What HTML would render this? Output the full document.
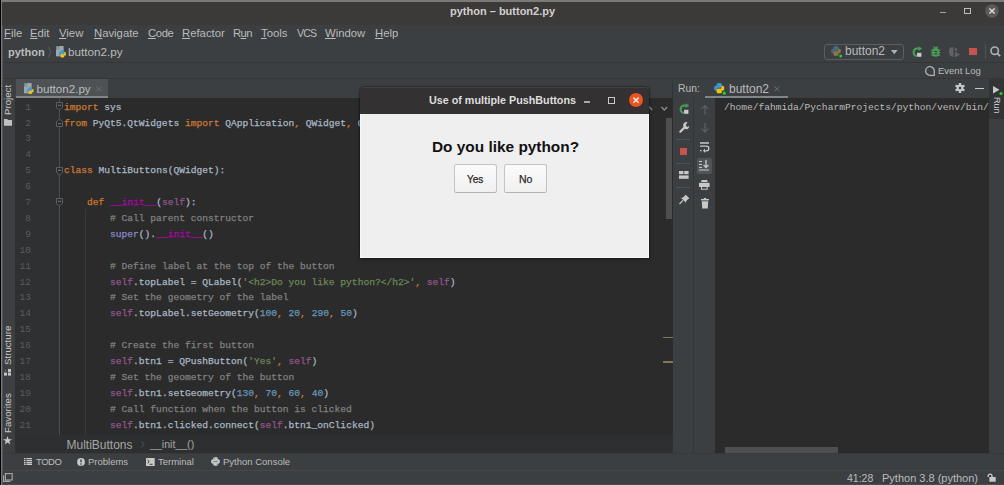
<!DOCTYPE html>
<html><head><meta charset="utf-8">
<style>
*{margin:0;padding:0;box-sizing:border-box}
html,body{width:1004px;height:485px;overflow:hidden;background:#3c3f41;font-family:"Liberation Sans",sans-serif;position:relative}
.a{position:absolute}
.t{position:absolute;white-space:pre;line-height:1}
svg{position:absolute;overflow:visible}
.mono{font-family:"Liberation Mono",monospace}
.code{position:absolute;left:64px;top:0;font-family:"Liberation Mono",monospace;font-size:9.6px;color:#a9b7c6;white-space:pre;-webkit-text-stroke:0.25px currentColor}
.ln{position:absolute;left:15px;width:16px;text-align:right;font-family:"Liberation Mono",monospace;font-size:9.6px;color:#595c5e;white-space:pre}
.k{color:#cc7832}.c{color:#808080}.s{color:#94558d}.str{color:#6a8759}.n{color:#6897bb}.d{color:#b200b2}.b{color:#8888c6}
.m u{text-decoration:underline;text-underline-offset:0.6px;text-decoration-thickness:1px}
.rot{position:absolute;white-space:pre;line-height:1;transform-origin:0 0;transform:rotate(-90deg);font-size:9.7px;color:#cacaca}
</style></head><body>
<svg width="0" height="0" style="position:absolute"><defs>
<symbol id="py" viewBox="0 0 100 100"><path d="M49 3C27 3 28 12 28 12V25H50V29H19C8 29 3 37 3 50C3 64 9 71 19 71H26V56C26 49 32 44 39 44H61C68 44 72 39 72 33V13C72 7 66 3 49 3Z" fill="var(--b)" stroke="var(--b)" stroke-width="6" stroke-linejoin="round"/><path d="M51 97C73 97 72 88 72 88V75H50V71H81C92 71 97 63 97 50C97 36 91 29 81 29H74V44C74 51 68 56 61 56H39C32 56 28 61 28 67V87C28 93 34 97 51 97Z" fill="var(--y)" stroke="var(--y)" stroke-width="6" stroke-linejoin="round"/><circle cx="38" cy="13" r="4" fill="var(--e)"/><circle cx="62" cy="87" r="4" fill="var(--e)"/></symbol>
<symbol id="rerun" viewBox="0 0 11 11"><path d="M4.8 10.1A3.8 3.8 0 0 1 4.8 2.6H7" stroke="#499c54" stroke-width="2" fill="none"/><path d="M6.6 0.2L10.2 2.6L6.6 5Z" fill="#499c54"/><rect x="5.1" y="6.8" width="4.3" height="4" fill="#cacaca"/></symbol>
</defs></svg>
<!-- outer borders -->
<div class="a" style="left:0;top:0;width:1004px;height:2px;background:#7a7a7a"></div>
<div class="a" style="left:0;top:0;width:1px;height:485px;background:#000"></div>
<div class="a" style="left:1px;top:0;width:1px;height:485px;background:#7a7a7a"></div>
<div class="a" style="left:2px;top:2px;width:1px;height:483px;background:#505254"></div>
<!-- title bar -->
<div class="a" style="left:2px;top:2px;width:1002px;height:22.5px;background:#3c3a38"></div>
<div class="t" style="left:450px;top:6px;font-size:11px;font-weight:bold;color:#d0d0d0">python – button2.py</div>
<div class="a" style="left:940px;top:11.8px;width:6px;height:1.3px;background:#a5a5a5"></div>
<div class="a" style="left:964px;top:8px;width:6.8px;height:6px;border:1.1px solid #bdbdbd"></div>
<svg style="left:985px;top:4px" width="14" height="14"><circle cx="7" cy="7" r="6.8" fill="#5c5a58"/><path d="M4.4 4.4L9.6 9.6M9.6 4.4L4.4 9.6" stroke="#dedede" stroke-width="1.4"/></svg>

<!-- menu bar -->
<div class="a" style="left:3px;top:24.5px;width:1001px;height:18px;background:#3c3f41"></div>
<div class="m" style="position:absolute;top:28px;left:0;font-size:11.3px;color:#bbbbbb">
<span class="t" style="left:4px"><u>F</u>ile</span>
<span class="t" style="left:30px"><u>E</u>dit</span>
<span class="t" style="left:59px"><u>V</u>iew</span>
<span class="t" style="left:94px"><u>N</u>avigate</span>
<span class="t" style="left:148px;letter-spacing:-0.4px"><u>C</u>ode</span>
<span class="t" style="left:182px"><u>R</u>efactor</span>
<span class="t" style="left:233px;letter-spacing:-0.6px">R<u>u</u>n</span>
<span class="t" style="left:261px"><u>T</u>ools</span>
<span class="t" style="left:297px;top:-0.2px;font-size:10.6px;letter-spacing:-0.9px">VCS</span>
<span class="t" style="left:325px"><u>W</u>indow</span>
<span class="t" style="left:375px"><u>H</u>elp</span>
</div>

<!-- nav bar -->
<div class="t" style="left:8px;top:46.7px;font-size:11px;font-weight:bold;color:#bbbbbb">python</div>
<svg style="left:47px;top:46px" width="5" height="12"><path d="M1 0.5L4 6L1 11.5" stroke="#5a5c5e" stroke-width="1" fill="none"/></svg>
<svg style="left:56px;top:46.3px" width="11" height="12"><path d="M0 0H7.6V10.3H0Z" fill="#9ea7ae"/><path d="M0 0H3.2V3.4H0Z" fill="#6f787e"/><path d="M0.8 0.8H2.6V2.8H0.8Z" fill="#9ea7ae"/><svg x="2.6" y="4.1" width="7.6" height="7.6" style="--b:#3d9bd8;--y:#f2c41a;--e:none;position:static"><circle cx="50" cy="50" r="52" fill="#4a4f52" opacity="0"/><use href="#py"/></svg></svg>
<div class="t" style="left:68px;top:46px;font-size:11.7px;color:#bbbbbb">button2.py</div>

<!-- run config combo -->
<div class="a" style="left:823.5px;top:43.5px;width:80.5px;height:16px;border:1px solid #5b5e60;border-radius:3px"></div>
<svg style="left:830.8px;top:46.2px" width="11" height="11"><svg width="10" height="10" style="--b:#4b6a82;--y:#8a7a45;--e:none;position:static"><use href="#py"/></svg><circle cx="9.7" cy="9.9" r="1.5" fill="#1ed51e"/></svg>
<div class="t" style="left:845px;top:45px;font-size:12px;color:#bbbbbb">button2</div>
<svg style="left:890.5px;top:49.5px" width="7" height="5"><path d="M0 0H6.6L3.3 4.2Z" fill="#afb1b3"/></svg>
<!-- toolbar icons -->
<svg style="left:912px;top:46px" width="11" height="11"><use href="#rerun"/></svg>
<svg style="left:931px;top:46px" width="10" height="11"><path d="M2.6 0.5L4.7 2.4L6.8 0.5" stroke="#499c54" stroke-width="1.3" fill="none"/><rect x="1.3" y="2" width="6.8" height="8.8" rx="3.2" fill="#499c54"/><path d="M0.6 4.2H8.8M0.6 6.6H8.8M0.9 9H8.5" stroke="#499c54" stroke-width="1.3" stroke-linecap="round"/><rect x="3.3" y="4.9" width="2.8" height="1" fill="#34383a"/><rect x="3.3" y="7.3" width="2.8" height="1" fill="#34383a"/></svg>
<svg style="left:949px;top:46.8px" width="11" height="11"><path d="M4.5 0.2H2.6C1 0.2 0 1.6 0 3.4V5.6C0 8 1.8 9.6 4.5 10Z" fill="#5f6163"/><path d="M5.9 0.4C7.4 0.6 8 1.6 8 3V4.6L5.9 3.4Z" fill="#5f6163"/><path d="M5.9 4.4L11 7.4L5.9 10.4Z" fill="#5f6163"/></svg>
<div class="a" style="left:969.3px;top:47.7px;width:7.7px;height:7.3px;background:#c75450"></div>
<div class="a" style="left:984.5px;top:44px;width:1px;height:15px;background:#505254"></div>
<svg style="left:989px;top:45px" width="13" height="13"><circle cx="5.7" cy="5.7" r="3.7" stroke="#afb1b3" stroke-width="1.6" fill="none"/><path d="M8.3 8.3L11.2 11.2" stroke="#afb1b3" stroke-width="1.8"/></svg>

<div class="a" style="left:3px;top:62px;width:1001px;height:1px;background:#363636"></div>
<svg style="left:925px;top:65.5px" width="11" height="11"><path d="M5 0.7A4.3 4.3 0 1 0 5 9.3H9.3V5A4.3 4.3 0 0 0 5 0.7Z" stroke="#afb1b3" stroke-width="1.3" fill="none"/></svg>
<div class="t" style="left:938px;top:65.8px;font-size:9.5px;color:#bbbbbb">Event Log</div>
<div class="a" style="left:3px;top:78px;width:1001px;height:1px;background:#363636"></div>

<!-- left strip -->
<div class="a" style="left:3px;top:79px;width:12px;height:374px;background:#3c3f41"></div>
<div class="rot" style="left:3.2px;top:115px">Project</div>
<svg style="left:3.5px;top:119px" width="8" height="7"><path d="M0 0H3.2L4 1H8V6.8H0Z" fill="#c0c0c0"/></svg>
<div class="rot" style="left:3.2px;top:364.5px">Structure</div>
<svg style="left:4px;top:368.5px" width="8" height="7"><rect x="4" y="0" width="3" height="3" fill="#c4c4c4"/><rect x="0" y="3.6" width="3" height="3" fill="#c4c4c4"/><rect x="4" y="3.6" width="3" height="3" fill="#c4c4c4"/><path d="M1.5 0.5V3.6" stroke="#8a8a8a" stroke-width="0.6"/></svg>
<div class="rot" style="left:3.2px;top:433px">Favorites</div>
<svg style="left:3px;top:436px" width="9" height="9"><path d="M4.5 0L5.6 3.2H9L6.3 5.2L7.3 8.6L4.5 6.5L1.7 8.6L2.7 5.2L0 3.2H3.4Z" fill="#c8c8c8"/></svg>

<!-- editor -->
<div class="a" style="left:15px;top:98px;width:658px;height:337px;background:#2b2b2b"></div>
<div class="a" style="left:15px;top:98px;width:44.5px;height:337px;background:#2f3032"></div>
<!-- tab -->
<div class="a" style="left:15.5px;top:79px;width:92px;height:19px;background:#4e5254"></div>
<div class="a" style="left:15.5px;top:96px;width:92px;height:2px;background:#80858a"></div>
<svg style="left:23.6px;top:83.2px" width="11" height="12"><path d="M0 0H7.6V10.3H0Z" fill="#9ea7ae"/><path d="M0 0H3.2V3.4H0Z" fill="#6f787e"/><path d="M0.8 0.8H2.6V2.8H0.8Z" fill="#9ea7ae"/><svg x="2.8" y="4.2" width="7" height="7" style="--b:#3d9bd8;--y:#f2c41a;--e:none;position:static"><use href="#py"/></svg></svg>
<div class="t" style="left:36.5px;top:82.5px;font-size:11.6px;color:#bbbbbb">button2.py</div>
<svg style="left:96px;top:85.5px" width="6" height="6"><path d="M0.3 0.3L5.4 5.4M5.4 0.3L0.3 5.4" stroke="#6a6d70" stroke-width="1"/></svg>

<!-- fold line & markers -->
<div class="a" style="left:59px;top:98px;width:1px;height:337px;background:#4a4c4e"></div>
<svg style="left:56px;top:102px" width="7" height="9"><path d="M0.5 0.5H6.5V5.5L3.5 8L0.5 5.5Z" fill="#2b2b2b" stroke="#5c5e60" stroke-width="1"/><path d="M2 3.3H5" stroke="#7a7c7e"/></svg>
<svg style="left:56px;top:117.5px" width="7" height="9"><path d="M0.5 8.5H6.5V3.5L3.5 1L0.5 3.5Z" fill="#2b2b2b" stroke="#5c5e60" stroke-width="1"/><path d="M2 5.7H5" stroke="#7a7c7e"/></svg>
<svg style="left:56px;top:166.6px" width="7" height="9"><path d="M0.5 0.5H6.5V5.5L3.5 8L0.5 5.5Z" fill="#2b2b2b" stroke="#5c5e60" stroke-width="1"/><path d="M2 3.3H5" stroke="#7a7c7e"/></svg>
<svg style="left:56px;top:198.4px" width="7" height="9"><path d="M0.5 0.5H6.5V5.5L3.5 8L0.5 5.5Z" fill="#2b2b2b" stroke="#5c5e60" stroke-width="1"/><path d="M2 3.3H5" stroke="#7a7c7e"/></svg>
<div class="a" style="left:85px;top:209px;width:1px;height:226px;background:#393939"></div>

<div id="code" class="a" style="left:0;top:99.7px;width:673px;height:335px;line-height:15.9px;overflow:hidden">
<div class="ln" style="top:0.0px">1</div><div class="code" style="top:0.0px"><span class="k">import</span> sys</div>
<div class="ln" style="top:15.9px">2</div><div class="code" style="top:15.9px"><span class="k">from</span> PyQt5.QtWidgets <span class="k">import</span> QApplication<span class="k">,</span> QWidget<span class="k">,</span> QLabel<span class="k">,</span> QPushButton</div>
<div class="ln" style="top:31.8px">3</div><div class="code" style="top:31.8px"></div>
<div class="ln" style="top:47.7px">4</div><div class="code" style="top:47.7px"></div>
<div class="ln" style="top:63.6px">5</div><div class="code" style="top:63.6px"><span class="k">class</span> MultiButtons(QWidget):</div>
<div class="ln" style="top:79.5px">6</div><div class="code" style="top:79.5px"></div>
<div class="ln" style="top:95.4px">7</div><div class="code" style="top:95.4px">    <span class="k">def</span> <span class="d">__init__</span>(<span class="s">self</span>):</div>
<div class="ln" style="top:111.3px">8</div><div class="code" style="top:111.3px">        <span class="c"># Call parent constructor</span></div>
<div class="ln" style="top:127.2px">9</div><div class="code" style="top:127.2px">        <span class="b">super</span>().<span class="d">__init__</span>()</div>
<div class="ln" style="top:143.1px">10</div><div class="code" style="top:143.1px"></div>
<div class="ln" style="top:159.0px">11</div><div class="code" style="top:159.0px">        <span class="c"># Define label at the top of the button</span></div>
<div class="ln" style="top:174.9px">12</div><div class="code" style="top:174.9px">        <span class="s">self</span>.topLabel = QLabel(<span class="str">'&lt;h2&gt;Do you like python?&lt;/h2&gt;'</span><span class="k">,</span> <span class="s">self</span>)</div>
<div class="ln" style="top:190.8px">13</div><div class="code" style="top:190.8px">        <span class="c"># Set the geometry of the label</span></div>
<div class="ln" style="top:206.7px">14</div><div class="code" style="top:206.7px">        <span class="s">self</span>.topLabel.setGeometry(<span class="n">100</span><span class="k">,</span> <span class="n">20</span><span class="k">,</span> <span class="n">290</span><span class="k">,</span> <span class="n">50</span>)</div>
<div class="ln" style="top:222.6px">15</div><div class="code" style="top:222.6px"></div>
<div class="ln" style="top:238.5px">16</div><div class="code" style="top:238.5px">        <span class="c"># Create the first button</span></div>
<div class="ln" style="top:254.4px">17</div><div class="code" style="top:254.4px">        <span class="s">self</span>.btn1 = QPushButton(<span class="str">'Yes'</span><span class="k">,</span> <span class="s">self</span>)</div>
<div class="ln" style="top:270.3px">18</div><div class="code" style="top:270.3px">        <span class="c"># Set the geometry of the button</span></div>
<div class="ln" style="top:286.2px">19</div><div class="code" style="top:286.2px">        <span class="s">self</span>.btn1.setGeometry(<span class="n">130</span><span class="k">,</span> <span class="n">70</span><span class="k">,</span> <span class="n">60</span><span class="k">,</span> <span class="n">40</span>)</div>
<div class="ln" style="top:302.1px">20</div><div class="code" style="top:302.1px">        <span class="c"># Call function when the button is clicked</span></div>
<div class="ln" style="top:318.0px">21</div><div class="code" style="top:318.0px">        <span class="s">self</span>.btn1.clicked.connect(<span class="s">self</span>.btn1_onClicked)</div>
</div><!--/code-->

<!-- editor right widgets -->
<svg style="left:646px;top:105.5px" width="7" height="5"><path d="M0.5 4L3.3 1L6.1 4" stroke="#8c8c8c" stroke-width="1.3" fill="none"/></svg>
<svg style="left:660.5px;top:105.5px" width="7" height="5"><path d="M0.5 1L3.3 4L6.1 1" stroke="#8c8c8c" stroke-width="1.3" fill="none"/></svg>
<div class="a" style="left:666px;top:118px;width:6px;height:101px;background:#4d4f51"></div>
<div class="a" style="left:662.5px;top:336.8px;width:10px;height:1.6px;background:#7f765c"></div>
<div class="a" style="left:662.5px;top:361.2px;width:10px;height:1.6px;background:#7f765c"></div>

<!-- breadcrumbs -->
<div class="a" style="left:15px;top:435px;width:974px;height:18px;background:#2e2f30"></div>
<div class="t" style="left:66.5px;top:438.5px;font-size:12px;color:#a6a6a6">MultiButtons</div>
<svg style="left:140.5px;top:441px" width="4" height="7"><path d="M0.5 0.5L3 3.5L0.5 6.5" stroke="#555759" stroke-width="0.9" fill="none"/></svg>
<div class="t" style="left:150px;top:438.5px;font-size:10.6px;color:#a6a6a6">__init__()</div>

<!-- bottom toolbar -->
<div class="a" style="left:3px;top:453px;width:1001px;height:17px;background:#3c3f41;border-top:1px solid #37393b"></div>
<svg style="left:24px;top:458px" width="8" height="7"><path d="M0 0.6H1.6M0 2.6H1.6M0 4.6H1.6M0 6.4H1.6M2.4 0.6H8M2.4 2.6H8M2.4 4.6H8M2.4 6.4H8" stroke="#c8c8c8" stroke-width="1.1"/></svg>
<div class="t" style="left:36px;top:457.3px;font-size:9.5px;letter-spacing:-0.45px;color:#bbbbbb">TODO</div>
<svg style="left:76.5px;top:458px" width="8" height="8"><circle cx="4" cy="3.9" r="3.9" fill="#c8c8c8"/><path d="M4 1.4V4.3" stroke="#3c3f41" stroke-width="1.4"/><circle cx="4" cy="6" r="0.8" fill="#3c3f41"/></svg>
<div class="t" style="left:88px;top:457.3px;font-size:9.5px;color:#bbbbbb">Problems</div>
<svg style="left:145.5px;top:457.5px" width="9" height="8"><rect width="8.7" height="8" fill="#c8c8c8"/><path d="M1.5 2L3.3 3.6L1.5 5.2M3.6 6.3H6.5" stroke="#3c3f41" stroke-width="1" fill="none"/></svg>
<div class="t" style="left:158px;top:457.3px;font-size:9.5px;color:#bbbbbb">Terminal</div>
<svg style="left:211px;top:457px;--b:#c8c8c8;--y:#c8c8c8;--e:#3c3f41" width="9" height="9"><use href="#py"/></svg>
<div class="t" style="left:223px;top:457.3px;font-size:9.5px;color:#bbbbbb">Python Console</div>
<div class="a" style="left:3px;top:470px;width:1001px;height:1px;background:#474646"></div>
<svg style="left:3px;top:473px" width="10" height="9"><rect x="2.4" y="0.6" width="6.8" height="6.4" fill="none" stroke="#a8a8a8" stroke-width="1.1"/><path d="M0.6 2.2V8.4H7.2" stroke="#a8a8a8" stroke-width="1.1" fill="none"/></svg>
<div class="t" style="left:847px;top:473px;font-size:10.5px;color:#bbbbbb">41:28</div>
<div class="t" style="left:882px;top:473px;font-size:11px;color:#bbbbbb">Python 3.8 (python)</div>
<svg style="left:986.5px;top:473px" width="10" height="9"><path d="M1.2 4V3A1.9 1.9 0 0 1 5 3V4.2" stroke="#c8c8c8" stroke-width="1.3" fill="none"/><rect x="2.4" y="4" width="6.3" height="4.7" fill="#c8c8c8"/></svg>
<div class="a" style="left:3px;top:484px;width:1001px;height:1px;background:#4b4b4b"></div>

<!-- run panel -->
<div class="a" style="left:673px;top:79px;width:316px;height:19px;background:#3c3f41"></div>
<div class="a" style="left:672px;top:79px;width:1px;height:19px;background:#323435"></div>
<div class="t" style="left:678px;top:83.5px;font-size:10.3px;color:#bbbbbb">Run:</div>
<svg style="left:714.2px;top:83.2px" width="12" height="12"><svg width="10.5" height="10.5" style="--b:#3d9bd8;--y:#f2c41a;--e:none;position:static"><use href="#py"/></svg><circle cx="10.3" cy="10.2" r="1.6" fill="#1ed51e"/></svg>
<div class="t" style="left:729px;top:83px;font-size:12px;color:#bbbbbb">button2</div>
<svg style="left:774px;top:85.5px" width="6" height="6"><path d="M0.3 0.3L5.4 5.4M5.4 0.3L0.3 5.4" stroke="#6a6d70" stroke-width="1"/></svg>
<div class="a" style="left:705px;top:96px;width:82.5px;height:2px;background:#80858a"></div>
<svg style="left:955px;top:83px" width="10" height="10"><g fill="#c8c8c8"><circle cx="5" cy="5" r="3.4"/><rect x="3.9" y="0" width="2.2" height="10"/><rect x="3.9" y="0" width="2.2" height="10" transform="rotate(60 5 5)"/><rect x="3.9" y="0" width="2.2" height="10" transform="rotate(120 5 5)"/></g><circle cx="5" cy="5" r="1.3" fill="#3c3f41"/></svg>
<div class="a" style="left:974.5px;top:87.5px;width:9px;height:1.6px;background:#c8c8c8"></div>

<div class="a" style="left:673px;top:98px;width:20px;height:355px;background:#3c3f41"></div>
<div class="a" style="left:693px;top:98px;width:1px;height:355px;background:#333537"></div>
<div class="a" style="left:694px;top:98px;width:21px;height:355px;background:#3c3f41"></div>
<div class="a" style="left:715px;top:98px;width:274px;height:355px;background:#2b2b2b"></div>
<div class="t mono" style="left:724px;top:102.5px;font-size:9.6px;color:#bbbbbb">/home/fahmida/PycharmProjects/python/venv/bin/</div>
<div class="a" style="left:724.5px;top:446.5px;width:113.5px;height:6px;background:#4d4f51"></div>
<!-- run toolbar col1 -->
<svg style="left:679px;top:103.3px" width="11" height="11"><use href="#rerun"/></svg>
<svg style="left:678.5px;top:122px" width="11" height="11"><path d="M1.3 9.7L5.2 5.8" stroke="#c8c8c8" stroke-width="2.2" stroke-linecap="round"/><path d="M4.3 4.3A3.2 3.2 0 0 0 6.8 7.2A3.2 3.2 0 0 0 10.3 4L8.3 5L6.8 3.6L7.6 1.4L8.6 0.3A3.2 3.2 0 0 0 4.3 4.3Z" fill="#c8c8c8"/></svg>
<div class="a" style="left:676px;top:139px;width:14px;height:1px;background:#4e5153"></div>
<div class="a" style="left:680px;top:147.5px;width:7.4px;height:7.4px;background:#c75450"></div>
<div class="a" style="left:676px;top:163px;width:14px;height:1px;background:#4e5153"></div>
<svg style="left:678.5px;top:171px" width="10" height="8"><rect x="0" y="0" width="4.4" height="3.2" fill="#c8c8c8"/><rect x="5.2" y="0" width="4.4" height="3.2" fill="#c8c8c8"/><rect x="0" y="4.4" width="9.6" height="3.4" fill="#c8c8c8"/></svg>
<div class="a" style="left:676px;top:187px;width:14px;height:1px;background:#4e5153"></div>
<svg style="left:678.5px;top:193.5px" width="11" height="11"><path d="M6.5 0.5L10.5 4.5L9.2 5L7 7.2L7.2 9L1.9 3.7L3.6 3.8L5.9 1.7Z" fill="#c8c8c8"/><path d="M4 6.4L0.5 10" stroke="#c8c8c8" stroke-width="1.2"/></svg>
<!-- run toolbar col2 -->
<svg style="left:701px;top:104.5px" width="8" height="10"><path d="M4 0.6V9.5M0.7 3.9L4 0.6L7.3 3.9" stroke="#5f6264" stroke-width="1.2" fill="none"/></svg>
<svg style="left:701px;top:123px" width="8" height="10"><path d="M4 0V8.9M0.7 5.6L4 8.9L7.3 5.6" stroke="#5f6264" stroke-width="1.2" fill="none"/></svg>
<svg style="left:700px;top:142px" width="10" height="11"><path d="M0 1H9M0 4.2H6.5A2.3 2.3 0 0 1 6.5 8.8H4" stroke="#c8c8c8" stroke-width="1.3" fill="none"/><path d="M5 6.6L3 8.8L5 11" fill="#c8c8c8"/><path d="M0 8.6H1.6" stroke="#c8c8c8" stroke-width="1.3"/></svg>
<div class="a" style="left:696.5px;top:157.5px;width:15.5px;height:16px;background:#505457;border-radius:2px"></div>
<svg style="left:699px;top:159.5px" width="11" height="11"><path d="M0 1.5H3M0 4.5H3M0 7.5H3M0 10H10" stroke="#c8c8c8" stroke-width="1.2"/><path d="M7 0V7.2M4.6 5L7 7.6L9.4 5" stroke="#c8c8c8" stroke-width="1.3" fill="none"/></svg>
<svg style="left:699px;top:180px" width="11" height="10"><rect x="2.4" y="0" width="6" height="2" fill="#c8c8c8"/><rect x="0" y="2.8" width="10.6" height="4.2" rx="0.6" fill="#c8c8c8"/><path d="M2.5 6.5V9.3H8.1V6.5" stroke="#c8c8c8" stroke-width="1.1" fill="none"/></svg>
<svg style="left:700.5px;top:197.5px" width="9" height="11"><rect x="0" y="1" width="8" height="1.4" fill="#c8c8c8"/><rect x="2.8" y="0" width="2.4" height="1.4" fill="#c8c8c8"/><path d="M0.8 3.2H7.2L6.8 10.6H1.2Z" fill="#c8c8c8"/></svg>

<!-- right strip -->
<div class="a" style="left:989px;top:79px;width:15px;height:374px;background:#3c3f41"></div>
<div class="a" style="left:989px;top:79px;width:15px;height:40px;background:#323436"></div>
<svg style="left:992.5px;top:86px" width="10" height="9"><path d="M0 0L6.5 3.8L0 7.6Z" fill="#c8c8c8"/><circle cx="8" cy="7.5" r="1.6" fill="#1ed51e"/></svg>
<div class="rot" style="left:1000.5px;top:97.4px;transform:rotate(90deg);font-size:9.1px">Run</div>

<!-- dialog -->
<div class="a" style="left:360px;top:87px;width:289px;height:171px;border-radius:3.5px 3.5px 0 0;background:#333131;box-shadow:0 0 0 0.6px rgba(0,0,0,.35),0 1px 4px rgba(0,0,0,.35);border-top:1px solid #43403e"></div>
<div class="a" style="left:360px;top:113.5px;width:289px;height:144.5px;background:#efefef;box-shadow:inset 1px -1px 0 #f9f9f9,inset -1px 0 0 #f9f9f9"></div>
<div class="t" style="left:429px;top:95px;font-size:10.75px;font-weight:bold;color:#dfdfdf">Use of multiple PushButtons</div>
<div class="a" style="left:583.6px;top:101px;width:6px;height:1.5px;background:#a8a8a8"></div>
<div class="a" style="left:608px;top:97px;width:6.5px;height:6.5px;border:1px solid #c8c8c8"></div>
<svg style="left:628.8px;top:92.7px" width="14" height="14"><circle cx="7" cy="7" r="7" fill="#e95420"/><path d="M4.4 4.6L9.7 9.8M9.7 4.6L4.4 9.8" stroke="#f5e6e0" stroke-width="1.5"/></svg>
<div class="t" style="left:432px;top:139px;font-size:15.4px;font-weight:bold;color:#111">Do you like python?</div>
<div class="a" style="left:454px;top:164px;width:43px;height:29px;border:1px solid #c4c4c4;border-bottom-color:#b4b4b4;border-radius:2.5px;background:linear-gradient(#fbfbfb,#f0f0f0)"></div>
<div class="a" style="left:504px;top:164px;width:43px;height:29px;border:1px solid #c4c4c4;border-bottom-color:#b4b4b4;border-radius:2.5px;background:linear-gradient(#fbfbfb,#f0f0f0)"></div>
<div class="t" style="left:467px;top:175px;font-size:10px;color:#2a2a2a;-webkit-text-stroke:0.25px #2a2a2a">Yes</div>
<div class="t" style="left:519px;top:174.3px;font-size:10.5px;color:#2a2a2a;-webkit-text-stroke:0.25px #2a2a2a">No</div>
</body></html>
